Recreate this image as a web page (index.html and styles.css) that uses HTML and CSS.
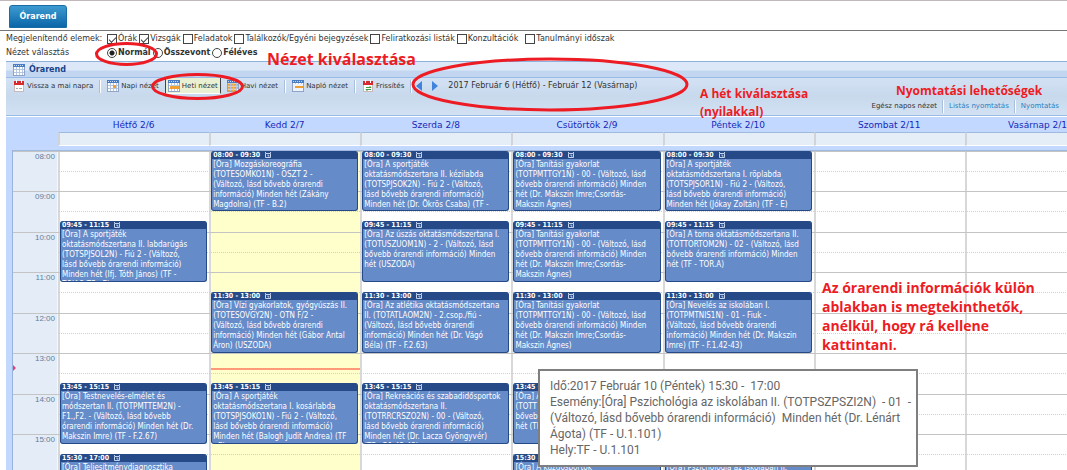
FILE: index.html
```html
<!DOCTYPE html>
<html lang="hu">
<head>
<meta charset="utf-8">
<title>Órarend</title>
<link rel="stylesheet" href="styles.css">
</head>
<body>
<svg class="defs" aria-hidden="true">
  <symbol id="cal" viewBox="0 0 12 12">
    <rect x="0.5" y="0.5" width="11" height="11" fill="#fff" stroke="#8fa5c8"/>
    <rect x="0" y="0" width="12" height="3" fill="#4a7cc4"/>
    <path d="M1 1.5h10" stroke="#c9dcf5" stroke-dasharray="1 1"/>
    <path d="M3.5 3v8M6.5 3v8M9.5 3v8M1 5.5h10M1 8.5h10" stroke="#b4c6e0" stroke-width="1"/>
  </symbol>
  <symbol id="red" viewBox="0 0 12 12">
    <rect x="1.5" y="1.5" width="9" height="10" fill="#fff" stroke="#c9b9bb"/>
    <rect x="1" y="1" width="10" height="4" fill="#d8292f"/>
    <path d="M3.5 0v3M8.5 0v3" stroke="#fff"/>
  </symbol>
  <symbol id="alarm" viewBox="0 0 8 8">
    <path d="M1 1.5h1M6 1.5h1M1.500 2.5h5v4h-5zM4 3.5v1.5h1.5" fill="none" stroke="#c3d2ee"/>
  </symbol>
</svg>

<nav class="tabs"><button class="tab">Órarend</button></nav>

<form class="filters">
  <div class="filter-row">
    <span class="caption">Megjelenítendő elemek:</span>
    <label><input type="checkbox" checked>Órák</label>
    <label><input type="checkbox" checked>Vizsgák</label>
    <label><input type="checkbox">Feladatok</label>
    <label><input type="checkbox">Találkozók/Egyéni bejegyzések</label>
    <label><input type="checkbox">Feliratkozási listák</label>
    <label class="spaced"><input type="checkbox">Konzultációk</label>
    <label><input type="checkbox">Tanulmányi időszak</label>
  </div>
  <div class="filter-row modes">
    <span class="caption">Nézet választás</span>
    <label><input type="radio" name="mode" checked>Normál</label>
    <label><input type="radio" name="mode">Összevont</label>
    <label><input type="radio" name="mode">Féléves</label>
  </div>
</form>

<main class="panel">
  <h1 class="panel-title"><svg class="icon"><use href="#cal"/></svg>Órarend</h1>
  <div class="toolbar">
    <div class="tools">
      <button class="tool"><svg class="icon" viewBox="0 0 12 12"><use href="#red"/><path d="M3 8.5h2M6 8.5h3" stroke="#aaa"/></svg>Vissza a mai napra</button>
      <i class="sep"></i>
      <button class="tool"><svg class="icon" viewBox="0 0 12 12"><use href="#cal"/><rect x="6" y="5" width="3" height="3" fill="#f0a030"/></svg>Napi nézet</button>
      <button class="tool active"><svg class="icon" viewBox="0 0 12 12"><use href="#cal"/><rect x="2" y="6" width="9" height="3" fill="#f0a030"/></svg>Heti nézet</button>
      <button class="tool"><svg class="icon" viewBox="0 0 12 12"><use href="#cal"/><path d="M1 4.5h10M1 7.5h10M1 10.5h8" stroke="#f0a030" stroke-width="2" stroke-dasharray="2 1"/></svg>Havi nézet</button>
      <i class="sep"></i>
      <button class="tool"><svg class="icon" viewBox="0 0 12 12"><use href="#cal"/><rect x="1" y="4" width="10" height="7" fill="#eef3fb"/><rect x="3" y="6" width="8" height="2" fill="#f0a030"/></svg>Napló nézet</button>
      <i class="sep"></i>
      <button class="tool"><svg class="icon" viewBox="0 0 12 12"><use href="#red"/><path d="M4 7.5h5l-1.5-1.5M9 9.5H4l1.5 1.5" fill="none" stroke="#3f9c45"/></svg>Frissítés</button>
      <i class="sep"></i>
      <button class="arrow" aria-label="Előző hét"><svg viewBox="0 0 6 10"><path d="M6 0v10L0 5z" fill="#3f83dc"/></svg></button>
      <button class="arrow" aria-label="Következő hét"><svg viewBox="0 0 6 10"><path d="M0 0v10L6 5z" fill="#3f83dc"/></svg></button>
      <span class="range">2017 Február 6 (Hétfő) - Február 12 (Vasárnap)</span>
    </div>
    <div class="prints">
      <button class="tool">Egész napos nézet</button>
      <i class="sep"></i>
      <a class="tool" href="#">Listás nyomtatás</a>
      <i class="sep"></i>
      <a class="tool" href="#">Nyomtatás</a>
    </div>
  </div>

  <div class="week">
    <div class="days">
      <span class="d1">Hétfő 2/6</span><span>Kedd 2/7</span><span>Szerda 2/8</span><span>Csütörtök 2/9</span><span>Péntek 2/10</span><span>Szombat 2/11</span><span>Vasárnap 2/12</span>
    </div>
    <div class="allday"><i class="d1"></i><i></i><i></i><i></i><i></i><i></i><i></i></div>

    <div class="schedule">
      <div class="hours"></div>
      <div class="day c1"></div><div class="day c2 today"></div><div class="day c3"></div><div class="day c4"></div><div class="day c5"></div><div class="day c6"></div><div class="day c7"></div>

      <div class="slot t0800"></div><div class="slot half t0830"></div>
      <div class="slot t0900"></div><div class="slot half t0930"></div>
      <div class="slot t1000"></div><div class="slot half t1030"></div>
      <div class="slot t1100"></div><div class="slot half t1130"></div>
      <div class="slot t1200"></div><div class="slot half t1230"></div>
      <div class="slot t1300"></div><div class="slot half t1330"></div>
      <div class="slot t1400"></div><div class="slot half t1430"></div>
      <div class="slot t1500"></div><div class="slot half t1530"></div>

      <time class="hour t0800">08:00</time>
      <time class="hour t0900">09:00</time>
      <time class="hour t1000">10:00</time>
      <time class="hour t1100">11:00</time>
      <time class="hour t1200">12:00</time>
      <time class="hour t1300">13:00</time>
      <time class="hour t1400">14:00</time>
      <time class="hour t1500">15:00</time>

      <svg class="now-mark" viewBox="0 0 3 6"><path d="M0 0v6l3-3z" fill="#e0407a"/></svg>
      <div class="now-line c2"></div>

      <article class="event c1 e0945"><h2>09:45 - 11:15 <svg><use href="#alarm"/></svg></h2><p>[Óra] A sportjáték<br>oktatásmódszertana II. labdarúgás<br>(TOTSPJSOL2N) - Fiú 2 - (Változó,<br>lásd bővebb órarendi információ)<br>Minden hét (Ifj. Tóth János) (TF -<br>TOJAO TF - E)</p></article>
      <article class="event c1 e1345"><h2>13:45 - 15:15 <svg><use href="#alarm"/></svg></h2><p>[Óra] Testnevelés-elmélet és<br>módszertan II. (TOTPMTTEM2N) -<br>F1.,F2. - (Változó, lásd bővebb<br>órarendi információ) Minden hét (Dr.<br>Makszin Imre) (TF - F.2.67)</p></article>
      <article class="event c1 e1530"><h2>15:30 - 17:00 <svg><use href="#alarm"/></svg></h2><p>[Óra] Teljesítménydiagnosztika</p></article>

      <article class="event c2 e0800"><h2>08:00 - 09:30 <svg><use href="#alarm"/></svg></h2><p>[Óra] Mozgáskoreográfia<br>(TOTESOMKO1N) - OSZT 2 -<br>(Változó, lásd bővebb órarendi<br>információ) Minden hét (Zákány<br>Magdolna) (TF - B.2)</p></article>
      <article class="event c2 e1130"><h2>11:30 - 13:00 <svg><use href="#alarm"/></svg></h2><p>[Óra] Vízi gyakorlatok, gyógyúszás II.<br>(TOTESOVGY2N) - OTN F/2 -<br>(Változó, lásd bővebb órarendi<br>információ) Minden hét (Gábor Antal<br>Áron) (USZODA)</p></article>
      <article class="event c2 e1345"><h2>13:45 - 15:15 <svg><use href="#alarm"/></svg></h2><p>[Óra] A sportjáték<br>oktatásmódszertana I. kosárlabda<br>(TOTSPJSOKO1N) - Fiú 2 - (Változó,<br>lásd bővebb órarendi információ)<br>Minden hét (Balogh Judit Andrea) (TF<br>- E)</p></article>

      <article class="event c3 e0800"><h2>08:00 - 09:30 <svg><use href="#alarm"/></svg></h2><p>[Óra] A sportjáték<br>oktatásmódszertana II. kézilabda<br>(TOTSPJSOK2N) - Fiú 2 - (Változó,<br>lásd bővebb órarendi információ)<br>Minden hét (Dr. Ökrös Csaba) (TF -<br>B)</p></article>
      <article class="event c3 e0945"><h2>09:45 - 11:15 <svg><use href="#alarm"/></svg></h2><p>[Óra] Az úszás oktatásmódszertana I.<br>(TOTUSZUOM1N) - 2 - (Változó, lásd<br>bővebb órarendi információ) Minden<br>hét (USZODA)</p></article>
      <article class="event c3 e1130"><h2>11:30 - 13:00 <svg><use href="#alarm"/></svg></h2><p>[Óra] Az atlétika oktatásmódszertana<br>II. (TOTATLAOM2N) - 2.csop./fiú -<br>(Változó, lásd bővebb órarendi<br>információ) Minden hét (Dr. Vágó<br>Béla) (TF - F.2.63)</p></article>
      <article class="event c3 e1345"><h2>13:45 - 15:15 <svg><use href="#alarm"/></svg></h2><p>[Óra] Rekreációs és szabadidősportok<br>oktatásmódszertana II.<br>(TOTRRCRSZO2N) - 00 - (Változó,<br>lásd bővebb órarendi információ)<br>Minden hét (Dr. Lacza Gyöngyvér)<br>(TF - F.1.42-43)</p></article>

      <article class="event c4 e0800"><h2>08:00 - 09:30 <svg><use href="#alarm"/></svg></h2><p>[Óra] Tanítási gyakorlat<br>(TOTPMTTGY1N) - 00 - (Változó, lásd<br>bővebb órarendi információ) Minden<br>hét (Dr. Makszin Imre;Csordás-<br>Makszin Ágnes)</p></article>
      <article class="event c4 e0945"><h2>09:45 - 11:15 <svg><use href="#alarm"/></svg></h2><p>[Óra] Tanítási gyakorlat<br>(TOTPMTTGY1N) - 00 - (Változó, lásd<br>bővebb órarendi információ) Minden<br>hét (Dr. Makszin Imre;Csordás-<br>Makszin Ágnes)</p></article>
      <article class="event c4 e1130"><h2>11:30 - 13:00 <svg><use href="#alarm"/></svg></h2><p>[Óra] Tanítási gyakorlat<br>(TOTPMTTGY1N) - 00 - (Változó, lásd<br>bővebb órarendi információ) Minden<br>hét (Dr. Makszin Imre;Csordás-<br>Makszin Ágnes)</p></article>
      <article class="event c4 e1345"><h2>13:45 - 15:15</h2><p>[Óra] A<br>(TOTT<br>bővebb<br>hét (TF</p></article>
      <article class="event c4 e1530"><h2>15:30 - 17:00</h2><p>[Óra] A küzdősportok</p></article>

      <article class="event c5 e0800"><h2>08:00 - 09:30 <svg><use href="#alarm"/></svg></h2><p>[Óra] A sportjáték<br>oktatásmódszertana I. röplabda<br>(TOTSPJSOR1N) - Fiú 2 - (Változó,<br>lásd bővebb órarendi információ)<br>Minden hét (Jókay Zoltán) (TF - E)</p></article>
      <article class="event c5 e0945"><h2>09:45 - 11:15 <svg><use href="#alarm"/></svg></h2><p>[Óra] A torna oktatásmódszertana II.<br>(TOTTORTOM2N) - 02 - (Változó, lásd<br>bővebb órarendi információ) Minden<br>hét (TF - TOR.A)</p></article>
      <article class="event c5 e1130"><h2>11:30 - 13:00 <svg><use href="#alarm"/></svg></h2><p>[Óra] Nevelés az iskolában I.<br>(TOTPMTNIS1N) - 01 - Fiuk -<br>(Változó, lásd bővebb órarendi<br>információ) Minden hét (Dr. Makszin<br>Imre) (TF - F.1.42-43)</p></article>
      <article class="event c5 e1530"><h2>15:30 - 17:00</h2><p>[Óra] Pszichológia az iskolában II.</p></article>
    </div>
  </div>
</main>

<div class="tooltip" role="tooltip">Idő:2017 Február 10 (Péntek) 15:30 -&nbsp; 17:00<br>Esemény:[Óra] Pszichológia az iskolában II. (TOTPSZPSZI2N)&nbsp; - 01&nbsp; -<br>(Változó, lásd bővebb órarendi információ)&nbsp; Minden hét (Dr. Lénárt<br>Ágota) (TF - U.1.101)<br>Hely:TF - U.1.101</div>

<svg class="marks" aria-hidden="true">
  <ellipse cx="126.5" cy="54" rx="30" ry="10.5"/>
  <ellipse cx="197.5" cy="86.5" rx="45" ry="12"/>
  <ellipse cx="550" cy="84.5" rx="137" ry="25.5"/>
</svg>
<div class="note note-view">Nézet kiválasztása</div>
<div class="note note-week">A hét kiválasztása<br>(nyilakkal)</div>
<div class="note note-print">Nyomtatási lehetőségek</div>
<div class="note note-info">Az órarendi információk külön<br>ablakban is megtekinthetők,<br>anélkül, hogy rá kellene<br>kattintani.</div>
</body>
</html>
```
FILE: styles.css
```css
* { box-sizing: border-box; }

body {
  margin: 0;
  height: 100vh;
  overflow: hidden;
  position: relative;
  background: #fff;
  border-top: 1px solid #c0b8ba;
  color: #333;
  font: 8px/14px "DejaVu Sans", Verdana, sans-serif;
  white-space: nowrap;
}

button, input { font: inherit; color: inherit; margin: 0; }
button { border: 0; background: none; padding: 0; }
.defs { position: absolute; width: 0; height: 0; }
.icon { width: 12px; height: 12px; flex: none; }

/* Tabs */
.tabs {
  display: flex;
  padding: 4px 9px 2px;
  border-bottom: 1px solid #777;
}
.tab {
  width: 58px;
  height: 23px;
  border: 1px solid #1a6ca5;
  border-radius: 3px 3px 0 0;
  background: linear-gradient(#3d9bd0, #0a66a8);
  color: #fff;
  font-weight: bold;
}

/* Filters */
.filters { padding: 1px 6px; }
.filter-row { display: flex; align-items: center; height: 14px; }
.caption { width: 101px; }
.filter-row label { display: flex; align-items: center; gap: 1px; margin-right: 2px; }
.filter-row .spaced { margin-right: 7px; }
.modes label { font-weight: bold; }
.filter-row input {
  appearance: none;
  width: 10px;
  height: 10px;
  border: 1px solid #444;
  background: #fff;
}
.filter-row input[type="radio"] { border-radius: 50%; }
.filter-row input[type="radio"]:checked {
  background: radial-gradient(circle, #222 0 2px, #fff 3px);
}
.filter-row input[type="checkbox"]:checked::before {
  content: "";
  display: block;
  width: 6px;
  height: 3px;
  margin: 2px 1px;
  border-left: 1px solid #444;
  border-bottom: 1px solid #444;
  transform: rotate(-45deg);
}

/* Panel */
.panel { margin-left: 6px; overflow: hidden; }
.panel-title {
  display: flex;
  align-items: center;
  gap: 4px;
  height: 16px;
  margin: 0;
  padding-left: 7px;
  border-top: 1px solid #8db0dc;
  background: linear-gradient(#dce8f7 0 8px, #c3d6f1 9px 100%);
  color: #15428b;
  font-size: 8px;
}
.toolbar {
  display: flex;
  flex-direction: column;
  gap: 6px;
  height: 39px;
  border-top: 1px solid #99bbe8;
  border-bottom: 1px solid #99bbe8;
  background: linear-gradient(#d3e1f3, #c8d9ed 50%, #d2e2f3);
  font-size: 7px;
}
.tools, .prints { display: flex; align-items: center; }
.tools { height: 16px; padding-left: 5px; }
.prints { align-self: flex-end; height: 12px; padding-right: 8px; }
.tool {
  display: flex;
  align-items: center;
  gap: 2px;
  color: #333;
  text-decoration: none;
}
.tools .tool { height: 16px; padding: 0 2px; }
.tools .active {
  margin: 0 4px;
  background: #eaf0d2;
  border-right: 1px solid #444;
  border-left: 1px solid #444;
  border-bottom: 1px solid #fff;
}
a.tool { color: #2a7fc0; }
.sep {
  width: 2px;
  height: 13px;
  margin: 0 4px;
  background: linear-gradient(90deg, #a9bfdc 50%, #fff 50%);
}
.prints .sep { margin: 0 5px; }
.arrow { width: 16px; height: 10px; text-align: left; }
.arrow svg { display: block; width: 6px; height: 10px; }
.range { font-size: 8px; }

/* Week view; the last day runs past the right edge */
.week {
  width: calc(100% + 49px);
  border-top: 1px solid #fff;
  background: #c3d8ff;
}
.days, .allday {
  display: grid;
  grid-template-columns: 52px repeat(7, 1fr);
}
.d1 { grid-column: 2; }
.days { height: 15px; line-height: 16px; font-size: 9px; color: #1528b8; text-align: center; }
.allday { height: 18px; border-bottom: 4px solid #c3d8ff; }
.allday i {
  background: #e5edf7;
  border-top: 1px solid #a0b9df;
  border-left: 2px solid #d0d3d8;
  border-bottom: 1px solid #fff;
}

.schedule {
  display: grid;
  grid-template-columns: 45px repeat(7, 1fr);
  /* Two hours take 81px, in quarter-hour rows */
  grid-auto-rows: 10px 10px 10px 10px 10px 10px 10px 11px;
  margin-left: 6px;
  border-top: 1px solid #a0b9df;
  border-left: 1px solid #99b3dd;
}
.hours { grid-area: 1 / 1 / 37 / 2; background: #e4ecf7; border-right: 1px solid #f4f7fb; }
.day { grid-row: 1 / 37; background: #fff; border-left: 2px solid #d8d8d8; }
.today { background: #ffffcb; }
.slot { grid-column: 1 / -1; border-top: 1px solid #c4c4c4; height: 1px; }
.half { grid-column: 2 / -1; border-top: 1px dotted #d0d0d0; }
.hour {
  grid-column: 1;
  height: 11px;
  padding: 1px 3px 0 0;
  color: #5d7ea3;
  font: 8px/9px "Liberation Sans", Arial, sans-serif;
  text-align: right;
}

.c1 { grid-column: 2; } .c2 { grid-column: 3; } .c3 { grid-column: 4; }
.c4 { grid-column: 5; } .c5 { grid-column: 6; } .c6 { grid-column: 7; } .c7 { grid-column: 8; }

.t0800 { grid-row: 1; } .t0830 { grid-row: 3; }
.t0900 { grid-row: 5; } .t0930 { grid-row: 7; }
.t1000 { grid-row: 9; } .t1030 { grid-row: 11; }
.t1100 { grid-row: 13; } .t1130 { grid-row: 15; }
.t1200 { grid-row: 17; } .t1230 { grid-row: 19; }
.t1300 { grid-row: 21; } .t1330 { grid-row: 23; }
.t1400 { grid-row: 25; } .t1430 { grid-row: 27; }
.t1500 { grid-row: 29; } .t1530 { grid-row: 31; }

.now-mark { grid-area: 22 / 1; width: 3px; height: 6px; margin-top: 2px; }
.now-line { grid-row: 22; height: 2px; margin: 5px 0 0 2px; background: #ff9a78; }

.event {
  min-height: 0;
  margin: 0 2px;
  overflow: hidden;
  border: 1px solid #254a87;
  border-top: 0;
  border-radius: 3px;
  background: #668bc9;
  color: #fff;
  font: 8px/10px "DejaVu Sans Condensed", Tahoma, sans-serif;
}
.event h2 {
  display: flex;
  align-items: center;
  gap: 4px;
  height: 8px;
  margin: 0;
  padding-left: 1px;
  background: #254a87;
  font-size: 7px;
  line-height: 8px;
}
.event h2 svg { width: 8px; height: 8px; }
.event p { margin: 0; padding: 1px 0 0 1px; }
.e0800 { grid-row: 1 / 7; }
.e0945 { grid-row: 8 / 14; }
.e1130 { grid-row: 15 / 21; }
.e1345 { grid-row: 24 / 30; }
.e1530 { grid-row: 31 / 37; }

/* Overlays */
.tooltip {
  position: absolute;
  left: 538px;
  top: 368px;
  width: 380px;
  padding: 7px 10px;
  border: 2px solid #7f7f7f;
  background: #fff;
  color: #666;
  font: 12px/16px Roboto, "Segoe UI", sans-serif;
}
.marks {
  position: absolute;
  left: 0;
  top: -1px;
  width: 100%;
  height: 100%;
  fill: none;
  stroke: #ed1c24;
  stroke-width: 3;
  pointer-events: none;
}
.note {
  position: absolute;
  color: #ed1c24;
  font: bold 14px/19px "Open Sans", Calibri, sans-serif;
}
.note-view { left: 267px; top: 49px; font-size: 16px; }
.note-week { left: 700px; top: 84px; font-size: 12px; line-height: 18px; }
.note-print { left: 896px; top: 80px; font-size: 12px; }
.note-info { left: 822px; top: 277px; }
```
